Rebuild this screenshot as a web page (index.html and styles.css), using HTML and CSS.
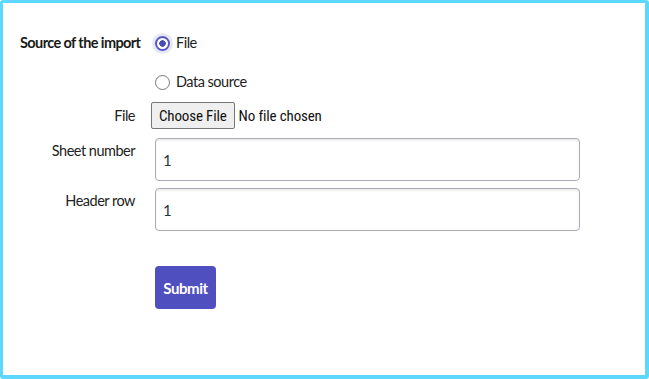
FILE: index.html
```html
<!DOCTYPE html>
<html lang="en">
<head>
  <meta charset="UTF-8">
  <meta name="viewport" content="width=device-width, initial-scale=1.0">
  <title>Import</title>
  <link rel="stylesheet" href="styles.css">
</head>
<body>
  <div class="frame">
    <form class="import-form">
      <div class="field">
        <span class="label label-strong">Source of the import</span>
        <div class="radio-group">
          <label class="radio"><input type="radio" name="source" checked> File</label>
          <label class="radio"><input type="radio" name="source"> Data source</label>
        </div>
      </div>

      <div class="field field-center">
        <label class="label" for="fileInput">File</label>
        <input type="file" id="fileInput" class="file-input">
      </div>

      <div class="field">
        <label class="label label-top" for="sheetInput">Sheet number</label>
        <input type="text" id="sheetInput" class="text-input" value="1">
      </div>

      <div class="field">
        <label class="label label-top" for="headerInput">Header row</label>
        <input type="text" id="headerInput" class="text-input" value="1">
      </div>

      <div class="actions">
        <button type="submit" class="submit">Submit</button>
      </div>
    </form>
  </div>
</body>
</html>
```

FILE: styles.css
```css
* {
  box-sizing: border-box;
}

body {
  margin: 0;
  font-family: Lato, "Open Sans", sans-serif;
  font-size: 14.5px;
  letter-spacing: -0.5px;
  color: #222;
  background: #fff;
}

.frame {
  height: 379px;
  width: 649px;
  border: 3px solid #5dd7fc;
  border-bottom-width: 4px;
  border-right-width: 4px;
  border-radius: 3px;
  padding: 30px 0 0 17px;
}

.field {
  display: grid;
  grid-template-columns: 115px 425px;
  column-gap: 20px;
  align-items: start;
  margin-bottom: 7px;
}

.field-center {
  align-items: center;
  margin-bottom: 9px;
}

.label {
  text-align: right;
  line-height: 20px;
  white-space: nowrap;
}

.label-strong {
  font-weight: 700;
  font-size: 14.5px;
  letter-spacing: -0.6px;
  color: #1a1a1a;
}

.label-top {
  padding-top: 3px;
}

.radio-group {
  display: flex;
  flex-direction: column;
  gap: 19px;
  margin-bottom: 3px;
}

.radio {
  display: flex;
  align-items: center;
  gap: 6px;
  line-height: 20px;
}

.radio input {
  appearance: none;
  margin: 0;
  width: 15px;
  height: 15px;
  border: 1.5px solid #777;
  border-radius: 50%;
  background: #fff;
}

.radio input:checked {
  border: 2px solid #5757c4;
  background: radial-gradient(circle, #4b4bb8 0 3px, #fff 3.5px);
  box-shadow: 0 0 0 3px #e7e7f8;
}

.file-input {
  margin-left: -4px;
  font-family: "Liberation Sans Narrow", "Roboto Condensed", Roboto, sans-serif;
  font-size: 15px;
  letter-spacing: -0.15px;
  color: #111;
}

.file-input::file-selector-button {
  font: inherit;
  letter-spacing: inherit;
  height: 27px;
  padding: 0 7px;
  margin-right: 4px;
  background: #efefef;
  border: 1px solid #767676;
  border-radius: 2px;
  color: #111;
}

.text-input {
  width: 425px;
  height: 43px;
  padding: 0 7px;
  font-family: inherit;
  font-size: 15px;
  color: #1c3344;
  border: 1px solid #a9acb4;
  border-radius: 4px;
  box-shadow: inset 0 2px 2px rgba(0, 0, 0, 0.07);
}

.actions {
  padding-left: 135px;
  margin-top: 35px;
}

.submit {
  height: 43px;
  width: 61px;
  padding: 0;
  font-family: inherit;
  font-size: 15px;
  font-weight: 700;
  letter-spacing: -0.4px;
  color: #fff;
  background: #4f4fbf;
  border: none;
  border-radius: 4px;
}
```
